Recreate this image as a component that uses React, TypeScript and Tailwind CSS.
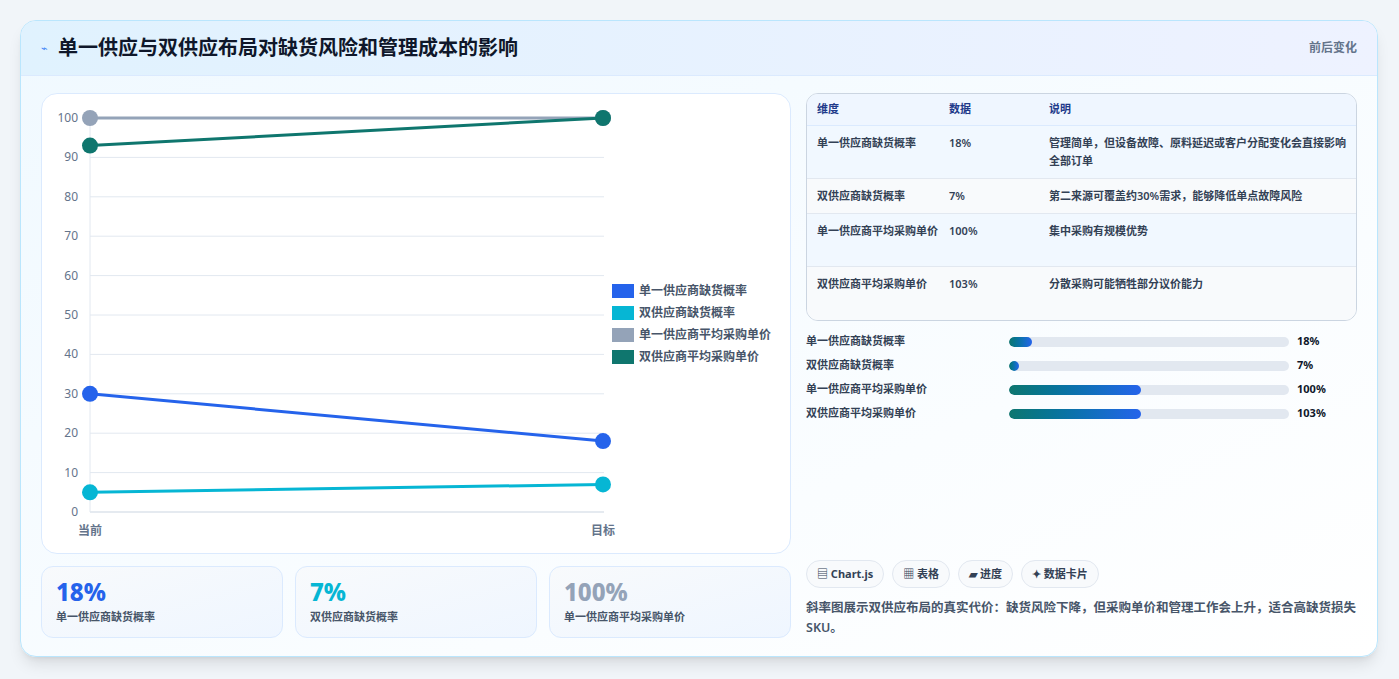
const font = { fontFamily: '"Noto Sans", "Noto Sans CJK SC", sans-serif' };

const series = [
  { name: "单一供应商缺货概率", color: "#2563eb", a: 30, b: 18 },
  { name: "双供应商缺货概率", color: "#06b6d4", a: 5, b: 7 },
  { name: "单一供应商平均采购单价", color: "#94a3b8", a: 100, b: 100 },
  { name: "双供应商平均采购单价", color: "#0f766e", a: 93, b: 100 },
];

const rows = [
  ["单一供应商缺货概率", "18%", "管理简单，但设备故障、原料延迟或客户分配变化会直接影响全部订单"],
  ["双供应商缺货概率", "7%", "第二来源可覆盖约30%需求，能够降低单点故障风险"],
  ["单一供应商平均采购单价", "100%", "集中采购有规模优势"],
  ["双供应商平均采购单价", "103%", "分散采购可能牺牲部分议价能力"],
];

const bars = [
  ["单一供应商缺货概率", "18%", 23],
  ["双供应商缺货概率", "7%", 10],
  ["单一供应商平均采购单价", "100%", 132],
  ["双供应商平均采购单价", "103%", 132],
] as const;

function y(v: number) {
  return 24 + (100 - v) * 3.94;
}

function Chart() {
  const ticks = [0, 10, 20, 30, 40, 50, 60, 70, 80, 90, 100];
  return (
    <svg width="750" height="460" className="block">
      {ticks.map((t) => (
        <g key={t}>
          <line x1="48" x2="562" y1={y(t)} y2={y(t)} stroke={t === 0 ? "#cbd5e1" : "#e2e8f0"} />
          <text x="36" y={y(t) + 4} textAnchor="end" fontSize="12" fill="#64748b">{t}</text>
        </g>
      ))}
      <line x1="48" x2="48" y1="24" y2="418" stroke="#e2e8f0" />
      <text x="48" y="441" textAnchor="middle" fontSize="12" fontWeight="600" fill="#64748b">当前</text>
      <text x="561" y="441" textAnchor="middle" fontSize="12" fontWeight="600" fill="#64748b">目标</text>
      {series.map((s) => (
        <g key={s.name}>
          <line x1="48" x2="561" y1={y(s.a)} y2={y(s.b)} stroke={s.color} strokeWidth="3" />
          <circle cx="48" cy={y(s.a)} r="8" fill={s.color} />
          <circle cx="561" cy={y(s.b)} r="8" fill={s.color} />
        </g>
      ))}
      {series.map((s, i) => (
        <g key={s.name + "l"}>
          <rect x="570" y={190 + i * 22} width="22" height="14" fill={s.color} />
          <text x="597" y={201 + i * 22} fontSize="12" fontWeight="600" fill="#475569">{s.name}</text>
        </g>
      ))}
    </svg>
  );
}

export default function App() {
  return (
    <div className="w-[1399px] h-[679px] bg-[#f1f5f9] pt-5 pl-5" style={font}>
      <div className="w-[1358px] h-[637px] rounded-2xl border border-[#bae6fd] bg-gradient-to-br from-[#f0f9ff] to-white shadow-lg overflow-hidden">
        <div className="h-[55px] flex items-center justify-between px-5 bg-gradient-to-r from-[#e0f2fe] to-[#eef2ff] border-b border-[#dbeafe]">
          <div className="flex items-center gap-2.5">
            <span className="text-[11px] text-[#3b82f6]">⌁</span>
            <h1 className="text-[20px] font-bold text-[#0f172a]">单一供应与双供应布局对缺货风险和管理成本的影响</h1>
          </div>
          <span className="text-[12px] font-semibold text-[#64748b]">前后变化</span>
        </div>
        <div className="flex gap-[15px] px-5 pt-[17px]">
          <div className="w-[750px] flex flex-col gap-3">
            <div className="h-[461px] rounded-2xl border border-[#dbeafe] bg-white overflow-hidden">
              <Chart />
            </div>
            <div className="grid grid-cols-3 gap-3">
              {[
                ["18%", "单一供应商缺货概率", "text-[#2563eb]"],
                ["7%", "双供应商缺货概率", "text-[#06b6d4]"],
                ["100%", "单一供应商平均采购单价", "text-[#94a3b8]"],
              ].map(([v, l, c]) => (
                <div key={l} className="h-[72px] rounded-xl border border-[#dbeafe] bg-gradient-to-br from-[#f8fafc] to-[#eff6ff] px-3.5 pt-2.5">
                  <div className={`text-[24px] font-extrabold leading-[30px] ${c}`}>{v}</div>
                  <div className="text-[11px] font-semibold text-[#475569] mt-0.5">{l}</div>
                </div>
              ))}
            </div>
          </div>
          <div className="w-[555px] flex flex-col">
            <div className="rounded-xl border border-[#cbd5e1] bg-[#f8fafc] overflow-hidden text-[11px] font-semibold text-[#334155]">
              <div className="grid grid-cols-[132px_100px_1fr] h-[32px] items-center px-2.5 bg-[#eff6ff] border-b border-[#dbeafe] text-[#1e3a8a]">
                <span>维度</span><span>数据</span><span>说明</span>
              </div>
              {rows.map((r, i) => (
                <div key={r[0]} className={`grid grid-cols-[132px_100px_1fr] px-2.5 pt-2 pb-2.5 leading-[18px] ${i < 3 ? "border-b border-[#e2e8f0]" : ""} ${i % 2 === 0 ? "bg-[#f1f8ff]" : "bg-[#f8fafc]"} ${i === 1 ? "h-[35px]" : "h-[53px]"}`}>
                  <span className="pr-2">{r[0]}</span><span>{r[1]}</span><span>{r[2]}</span>
                </div>
              ))}
            </div>
            <div className="flex flex-col gap-[7px] mt-3">
              {bars.map(([l, v, w]) => (
                <div key={l} className="flex items-center h-[17px] text-[11px] font-semibold text-[#334155]">
                  <span className="w-[203px]">{l}</span>
                  <div className="w-[280px] h-[10px] rounded-full bg-[#e2e8f0] overflow-hidden">
                    <div className="h-full rounded-full bg-gradient-to-r from-[#0f766e] to-[#2563eb]" style={{ width: w }} />
                  </div>
                  <span className="ml-2 font-bold text-[#0f172a]">{v}</span>
                </div>
              ))}
            </div>
            <div className="flex gap-2 mt-[138px]">
              {["▤ Chart.js", "▦ 表格", "▰ 进度", "✦ 数据卡片"].map((t) => (
                <span key={t} className="h-[28px] px-2.5 flex items-center rounded-full border border-[#e2e8f0] bg-[#f8fafc] text-[11px] font-bold text-[#334155]">{t}</span>
              ))}
            </div>
            <p className="mt-2.5 text-[12.5px] font-semibold leading-[20px] text-[#475569]">
              斜率图展示双供应布局的真实代价：缺货风险下降，但采购单价和管理工作会上升，适合高缺货损失SKU。
            </p>
          </div>
        </div>
      </div>
    </div>
  );
}
